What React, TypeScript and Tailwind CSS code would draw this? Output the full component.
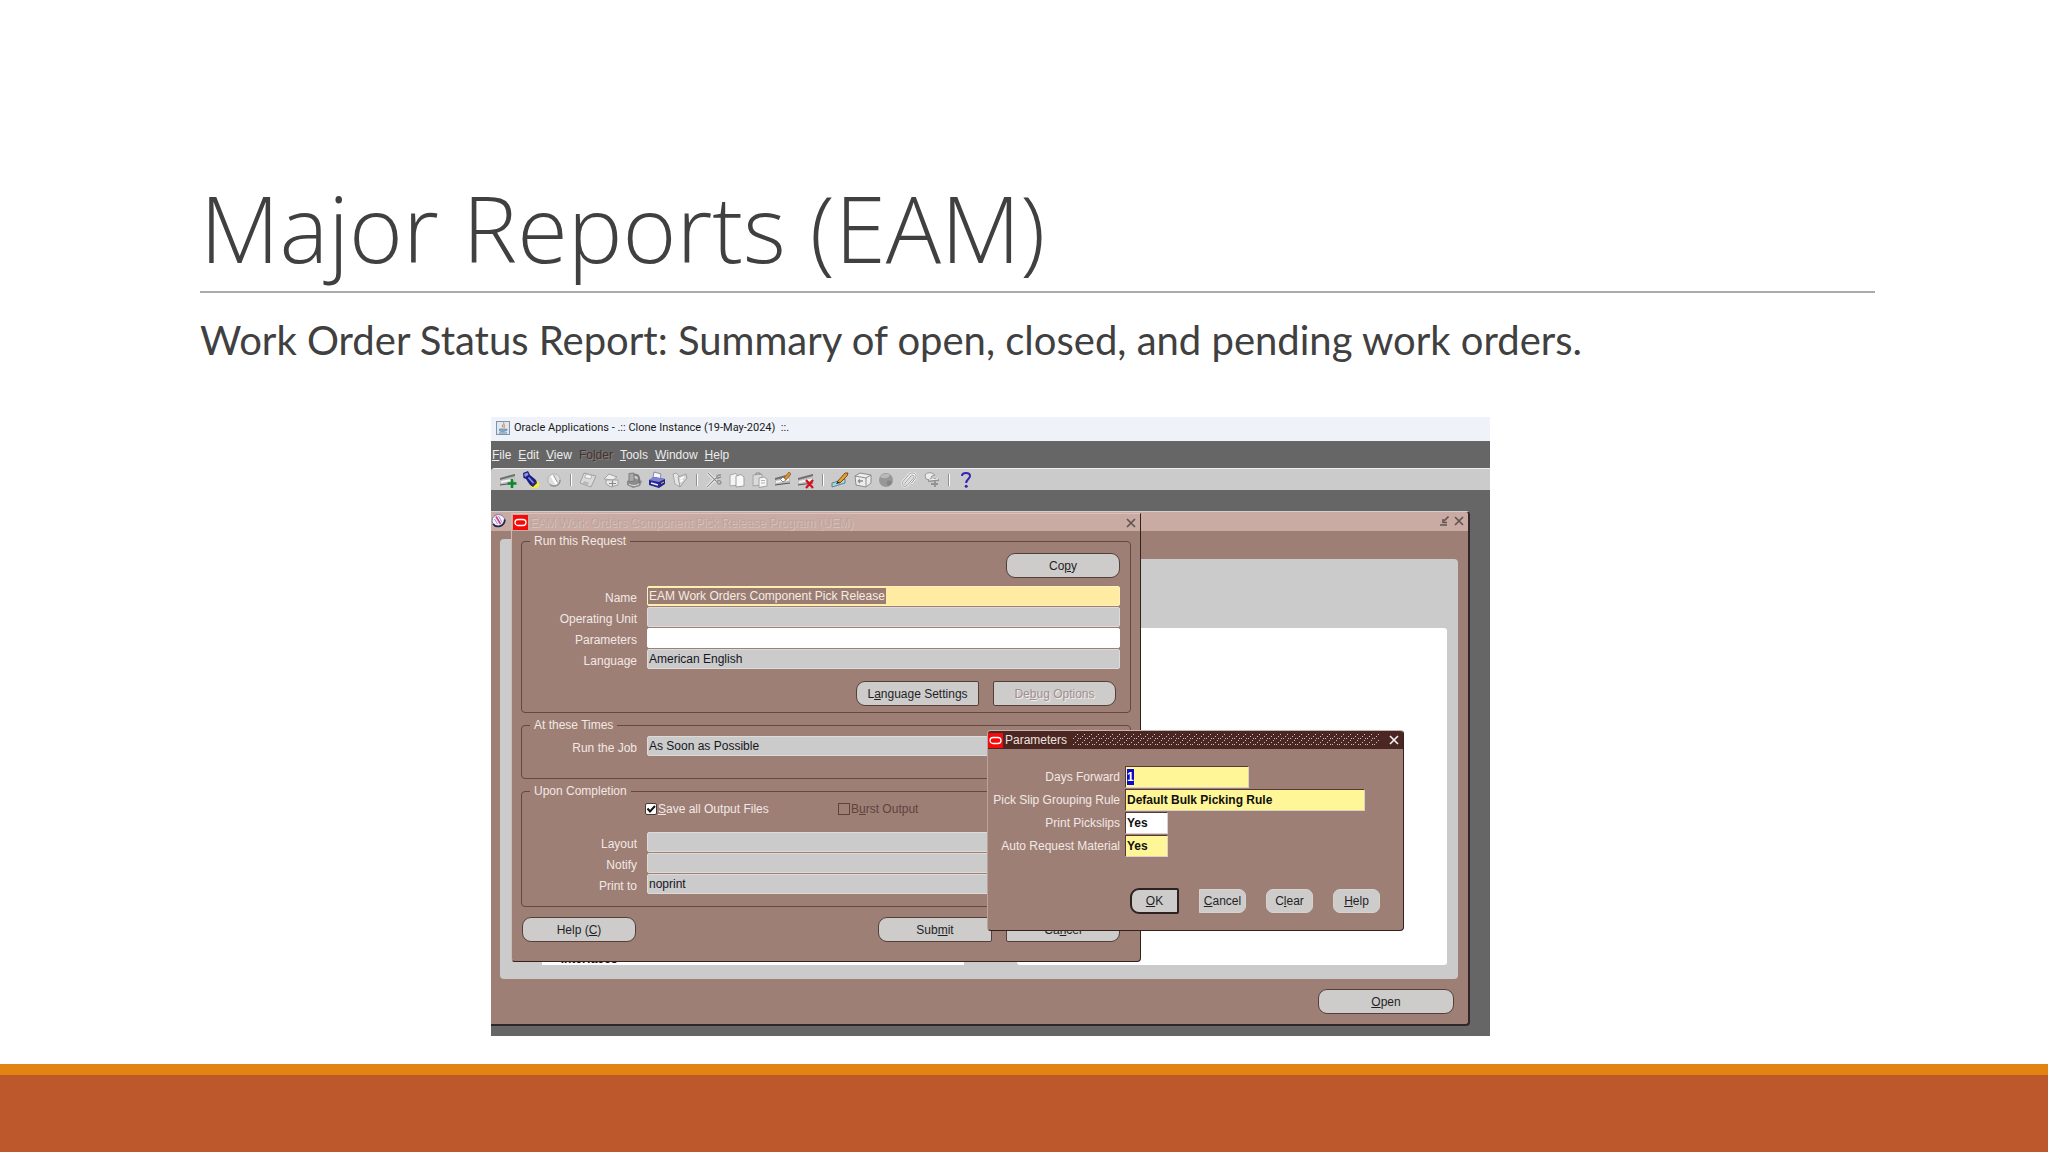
import React from "react";
import clsx from "clsx";

const svgProps = { width: 18, height: 18, viewBox: "0 0 18 18", fill: "none" };

// ---- toolbar icons ----

function Strip() {
  return (
    <>
      <path d="M1 7 L16 3 V12 L1 14 Z" fill="#bdbdbd" />
      <path d="M1 7 L16 3 V5 L1 9 Z" fill="#6f6f6f" />
      <path d="M2 10 L15 7.5 V9.5 L2 12 Z" fill="#f4f4f4" />
      <path d="M1 14 L16 12" stroke="#555" />
    </>
  );
}

const NewIcon = () => (
  <svg {...svgProps}>
    <Strip />
    <path d="M13 8 V17 M8.5 12.5 H17.5" stroke="#0b8a2c" strokeWidth="2.6" />
  </svg>
);

const FindIcon = () => (
  <svg {...svgProps}>
    <ellipse cx="12.5" cy="13.5" rx="5" ry="3.8" fill="#f3ec3b" />
    <path d="M1 2 L6 0 L8 4 L14 9 L15 12 L11 16 L8 14 L4 8 L1.5 7 Z" fill="#1d1d86" />
    <path d="M2 3 L5.5 1.5 L6.5 4 L3 6 Z" fill="#8e93dd" />
    <path d="M6.5 6.5 L11.5 12" stroke="#8d94ea" strokeWidth="1.6" />
    <path d="M10.5 14.5 L14 11" stroke="#3a3a3a" strokeWidth="1.4" />
  </svg>
);

const NavigatorIcon = () => (
  <svg {...svgProps}>
    <circle cx="9" cy="9" r="6.2" fill="#dedede" stroke="#b1b1b1" />
    <path d="M5 13.5 C8 16.5 15 15 15 9" stroke="#929292" strokeWidth="1.4" />
    <path d="M6.5 4.5 L11.5 13" stroke="#fff" strokeWidth="2.6" />
    <path d="M8.5 4 L12.5 11.5" stroke="#999" />
  </svg>
);

const SaveIcon = () => (
  <svg {...svgProps}>
    <path d="M5 2 L17 5 L12 16 L1 12 Z" fill="#dadada" stroke="#a0a0a0" />
    <path d="M7 3 L13 4.5 L11.5 8 L5.5 6.5 Z" fill="#f5f5f5" stroke="#b3b3b3" />
    <path d="M5 10 L10 11.5 L8.5 14.5 L3.5 12.8 Z" fill="#b9b9b9" />
  </svg>
);

const NextStepIcon = () => (
  <svg {...svgProps}>
    <path d="M2 8 L7 3 L15 6 L11 9 Z" fill="#eee" stroke="#a3a3a3" />
    <path d="M4 9 L16 9 V14 L9 16 L4 13 Z" fill="#e7e7e7" stroke="#a3a3a3" />
    <path d="M7 12.5 H14 M10.5 9.5 V15.5" stroke="#8b8b8b" strokeWidth="1.2" />
  </svg>
);

const CloseFormIcon = () => (
  <svg {...svgProps}>
    <path d="M2 10 L9 7 L17 10 L15 15 L8 17 L2 14 Z" fill="#8c8c8c" />
    <path d="M4 2.5 L9 2 V10 L4 11 Z" fill="#a9a9a9" stroke="#7e7e7e" />
    <path d="M9 4 C13 3 15 6 14 12" stroke="#7b7b7b" strokeWidth="2" />
    <path d="M4 13 C7 15 11 15 14 13" stroke="#dedede" />
  </svg>
);

const PrintIcon = () => (
  <svg {...svgProps}>
    <path d="M6 1 L13 3 L12 8 L5 7 Z" fill="#f7f7ff" stroke="#71719f" strokeWidth=".8" />
    <path d="M1 9 L6 6 L17 8 V13 L11 17 L1 14 Z" fill="#25258f" />
    <path d="M1 9 L6 6 L17 8 L11 11 Z" fill="#7e83cf" />
    <path d="M3 12 L10 14" stroke="#e9e9ff" strokeWidth="1.6" />
    <path d="M13 12.5 L16 11" stroke="#e2cf50" />
  </svg>
);

const FolderIcon = () => (
  <svg {...svgProps}>
    <path d="M2 3 L5 2 L8 5 L9 16 L4 13 Z" fill="#e6e6e6" stroke="#a7a7a7" />
    <path d="M7 6 L15 3 L16 7 L9 16 Z" fill="#d6d6d6" stroke="#a0a0a0" />
    <path d="M9 8 L13 6 M9 10.5 L12 9" stroke="#fff" strokeWidth="1.4" />
  </svg>
);

const CutIcon = () => (
  <svg {...svgProps}>
    <path d="M3 2 L12 11 M2 16 L12 6" stroke="#fff" strokeWidth="2.6" />
    <path d="M3 2 L12 11 M2 16 L12 6" stroke="#8d8d8d" strokeWidth="1.1" />
    <path d="M16 4 C12 3.5 11 6 12 7.5 L16 6 M12 10 C14 9 16 10 16 12 C15 14 12 13 12 10" stroke="#919191" strokeWidth="1.4" />
  </svg>
);

const CopyIcon = () => (
  <svg {...svgProps}>
    <path d="M2 4 L8 2.5 L10 5 V14 L2 15 Z" fill="#f4f4f4" stroke="#a8a8a8" />
    <path d="M8 5 L13 3.5 L16 6 V15 L8 16 Z" fill="#f9f9f9" stroke="#9f9f9f" />
  </svg>
);

const PasteIcon = () => (
  <svg {...svgProps}>
    <path d="M2 4 L11 3 V14 L2 15 Z" fill="#dadada" stroke="#a4a4a4" />
    <path d="M5 4 V2 H9 V4" stroke="#8d8d8d" />
    <path d="M8 7 L13 6 L16 8 V15 L8 16.5 Z" fill="#f6f6f6" stroke="#a1a1a1" />
    <path d="M10 9.5 H14 M10 12 H14" stroke="#b5b5b5" />
  </svg>
);

const ClearIcon = () => (
  <svg {...svgProps}>
    <Strip />
    <path d="M15 1 L17 3 L12 9 L9 8 Z" fill="#e0922d" stroke="#7a4414" strokeWidth=".6" />
    <path d="M9 6 L12 9 L9 11 L6.5 8.5 Z" fill="#fff" stroke="#7c5148" strokeWidth=".7" />
  </svg>
);

const DeleteIcon = () => (
  <svg {...svgProps}>
    <Strip />
    <path d="M9 9 L16 17 M16 9 L9 17" stroke="#d3101c" strokeWidth="2.2" />
  </svg>
);

const EditIcon = () => (
  <svg {...svgProps}>
    <path d="M1 12 L14 8 V12 L1 16 Z" fill="#9fdce2" stroke="#4d6f73" strokeWidth=".8" />
    <path d="M6 11 L14 2 L17 2 L16 5 L9 12 Z" fill="#ea9a2e" stroke="#5e3713" strokeWidth=".8" />
    <path d="M5 13 L6.5 10.5 L9 12 Z" fill="#222" />
  </svg>
);

const ZoomIcon = () => (
  <svg {...svgProps}>
    <path d="M1 5 L6 2 L17 4 V12 L12 16 L2 14 Z" fill="#ededed" stroke="#8b8b8b" />
    <path d="M1 5 L12 7 L17 4 M12 7 V15" stroke="#8b8b8b" />
    <path d="M4 10 H9 M4 10 L6 8.5 M4 10 L6 12" stroke="#8d8d8d" strokeWidth="1.3" />
  </svg>
);

const TranslateIcon = () => (
  <svg {...svgProps}>
    <circle cx="9" cy="9" r="7" fill="#979797" />
    <path d="M3 6 C6 2 11 2 13 4 C11 8 7 8 3 6 Z" fill="#b9b9b9" />
    <path d="M10 10 C13 9 15 10 15 12 C13 15 11 15 10 13 Z" fill="#858585" />
  </svg>
);

const clipPath = "M5 12 L11 5 C13 3 15 5 13.5 7 L7 14.5 C4 17 0.5 13.5 3 10.5 L9 3.5 C12 0 18 3 15.5 7 L11 12.5";

const AttachIcon = () => (
  <svg {...svgProps}>
    <path d={clipPath} stroke="#f4f4f4" strokeWidth="2.2" />
    <path d={clipPath} stroke="#8f8f8f" strokeWidth=".9" />
  </svg>
);

const ToolsIcon = () => (
  <svg {...svgProps}>
    <path d="M2 4 C5 0 10 2 12 4 L9 5 L7 9 L3 8 Z" fill="#ececec" stroke="#999" />
    <path d="M5 10 L16 9 M12 7 V16 M8 13 L15 13" stroke="#929292" strokeWidth="1.8" />
    <path d="M6 9 L15 8" stroke="#f8f8f8" />
  </svg>
);

const HelpIcon = () => (
  <svg {...svgProps}>
    <path
      d="M5 5 C5 1 13 1 13 5 C13 8 9.2 8 9.2 12"
      stroke="#3226b4"
      strokeWidth="2"
    />
    <circle cx="9.2" cy="15.2" r="1.5" fill="#3226b4" />
  </svg>
);

const toolGroups = [
  [
    { name: "New", Icon: NewIcon },
    { name: "Find", Icon: FindIcon },
    { name: "Show Navigator", Icon: NavigatorIcon },
  ],
  [
    { name: "Save", Icon: SaveIcon },
    { name: "Next Step", Icon: NextStepIcon },
    { name: "Close Form", Icon: CloseFormIcon },
    { name: "Print", Icon: PrintIcon },
    { name: "Folder", Icon: FolderIcon },
  ],
  [
    { name: "Cut", Icon: CutIcon },
    { name: "Copy", Icon: CopyIcon },
    { name: "Paste", Icon: PasteIcon },
    { name: "Clear Record", Icon: ClearIcon },
    { name: "Delete", Icon: DeleteIcon },
  ],
  [
    { name: "Edit", Icon: EditIcon },
    { name: "Zoom", Icon: ZoomIcon },
    { name: "Translations", Icon: TranslateIcon },
    { name: "Attachments", Icon: AttachIcon },
    { name: "Folder Tools", Icon: ToolsIcon },
  ],
  [{ name: "Help", Icon: HelpIcon }],
];

// ---- small window parts ----

const JavaIcon = () => (
  <svg width="14" height="14" viewBox="0 0 14 14" fill="none" className="shrink-0">
    <rect x=".5" y=".5" width="13" height="13" fill="#dfe8f0" stroke="#7f93a8" />
    <path d="M7.5 1.5 C9 3 5 4 7 6.5 M9 3.5 C7.5 4.5 8 5.5 8.5 6.5" stroke="#dc6a24" />
    <path d="M3.5 8 H9.5 V9.5 C9.5 11 3.5 11 3.5 9.5 Z M10 8 C12 8 11.5 9.8 9.5 10" fill="#8ba9c6" stroke="#5b83aa" strokeWidth=".7" />
    <path d="M3 12 H11" stroke="#5b83aa" />
  </svg>
);

const OracleMark = () => (
  <svg width="15" height="15" viewBox="0 0 15 15" fill="none" className="shrink-0">
    <rect width="15" height="15" fill="#f50a0a" />
    <rect x="2" y="4.5" width="11" height="6" rx="3" stroke="#fff" strokeWidth="1.3" />
  </svg>
);

const CompassIcon = () => (
  <svg width="15" height="15" viewBox="0 0 15 15" fill="none" className="shrink-0">
    <ellipse cx="7.5" cy="7.5" rx="6.4" ry="6" fill="#eef0fa" stroke="#7a7aa8" strokeWidth="1" />
    <path d="M2 11 C5 15 13.5 14 13.8 6.5" stroke="#23234e" strokeWidth="1.8" />
    <path d="M5 3.5 L9.5 11" stroke="#d43c8c" strokeWidth="1.7" />
    <path d="M7.5 3 L11 9.5 M3.5 6 L6.5 11" stroke="#8f8fb8" strokeWidth=".9" />
  </svg>
);

const CrossIcon = () => (
  <svg width="10" height="10" viewBox="0 0 10 10" fill="none">
    <path d="M1 1 L9 9 M9 1 L1 9" stroke="currentColor" strokeWidth="1.7" />
  </svg>
);

const RestoreIcon = () => (
  <svg width="10" height="10" viewBox="0 0 10 10" fill="none">
    <path d="M1 9 H8 M9.5 .5 L5 5" stroke="currentColor" strokeWidth="1.6" />
    <path d="M4 3 V6.5 H8" stroke="currentColor" strokeWidth="1.6" />
  </svg>
);

// underlines the mnemonic letter of a caption
function Caption({ text, at }: { text: string; at?: number }) {
  if (at === undefined) return <>{text}</>;
  return (
    <>
      {text.slice(0, at)}
      <span className="underline">{text[at]}</span>
      {text.slice(at + 1)}
    </>
  );
}

function FormButton({
  text,
  at,
  className,
  disabled,
}: {
  text: string;
  at?: number;
  className?: string;
  disabled?: boolean;
}) {
  return (
    <button
      type="button"
      disabled={disabled}
      className={clsx(
        "border bg-[#cdcccb] text-center leading-4 whitespace-nowrap",
        disabled ? "text-[#a28f8b] [text-shadow:1px_1px_0_#eee]" : "text-[#1f1f26]",
        className
      )}
    >
      <Caption text={text} at={at} />
    </button>
  );
}

function Field({
  id,
  label,
  value = "",
  tone = "grey",
}: {
  id: string;
  label: string;
  value?: string;
  tone?: "grey" | "white" | "selected";
}) {
  return (
    <div className="flex items-center gap-[10px]">
      <label htmlFor={id} className="w-[115px] shrink-0 pt-1 text-right text-[#f3e8e4]">
        {label}
      </label>
      <div
        className={clsx(
          "flex h-5 flex-1 items-center rounded-xs border",
          tone === "grey" && "border-[#dedad8] bg-[#cbcbcb]",
          tone === "white" && "border-white bg-white",
          tone === "selected" && "border-[#fff1bd] bg-[#ffeba2]"
        )}
      >
        <input
          id={id}
          readOnly
          value={value}
          className={clsx(
            "h-4 px-px outline-none",
            tone === "selected"
              ? "bg-[#9a7d72] text-[#f6ece4] [field-sizing:content]"
              : "w-full bg-transparent text-[#16161c]"
          )}
        />
      </div>
    </div>
  );
}

function ParamField({
  id,
  label,
  value,
  width,
  tone = "yellow",
  selected,
}: {
  id: string;
  label: string;
  value: string;
  width: string;
  tone?: "yellow" | "white";
  selected?: boolean;
}) {
  return (
    <div className="flex items-center gap-[5px]">
      <label htmlFor={id} className="w-[132px] shrink-0 text-right text-[#f3e8e4]">
        {label}
      </label>
      <div
        className={clsx(
          "flex h-[22px] items-center border border-t-[#553832] border-r-[#ddd0cb] border-b-[#ddd0cb] border-l-[#553832]",
          tone === "yellow" ? "bg-[#fff797]" : "bg-white",
          width
        )}
      >
        <input
          id={id}
          readOnly
          value={value}
          className={clsx(
            "h-4 font-bold outline-none",
            selected
              ? "ml-px bg-[#0909c9] text-white [field-sizing:content]"
              : "w-full bg-transparent pl-px text-[#101010]"
          )}
        />
      </div>
    </div>
  );
}

function Group({
  title,
  className,
  children,
}: {
  title: string;
  className?: string;
  children: React.ReactNode;
}) {
  return (
    <fieldset className={clsx("min-w-0 rounded-[4px] border border-[#644841] pr-[10px]", className)}>
      <legend className="ml-2 h-4 px-1 leading-4 text-[#f3e8e4]">{title}</legend>
      {children}
    </fieldset>
  );
}

function RequestDialog() {
  return (
    <div className="absolute top-[23px] left-[20px] w-[630px] rounded-b-[4px] border border-t-[#d9c2bc] border-r-[#33211e] border-b-[#33211e] border-l-[#cdbab4] bg-[#9d7f76]">
      <div className="flex h-[17px] items-center gap-[2px] bg-[#c9aba4] pr-1 pl-px">
        <OracleMark />
        <span className="flex-1 leading-4 text-[#bda49c] [text-shadow:1px_1px_0_#d6c2ba]">
          EAM Work Orders Component Pick Release Program (UEM)
        </span>
        <button type="button" aria-label="Close request" className="text-[#625450]">
          <CrossIcon />
        </button>
      </div>

      <div className="flex flex-col px-[9px] pt-[2px] pb-[19px]">
        <Group title="Run this Request" className="pb-[6px]">
          <div className="mt-1 flex justify-end">
            <FormButton text="Copy" at={2} className="h-[25px] w-[114px] rounded-[9px] border-[#54403a]" />
          </div>
          <div className="mt-2 flex flex-col gap-px">
            <Field id="name" label="Name" value="EAM Work Orders Component Pick Release" tone="selected" />
            <Field id="operating-unit" label="Operating Unit" />
            <Field id="parameters" label="Parameters" tone="white" />
            <Field id="language" label="Language" value="American English" />
          </div>
          <div className="mt-3 flex justify-end gap-[14px] pr-1">
            <FormButton
              text="Language Settings"
              at={1}
              className="h-[25px] w-[123px] rounded-l-[9px] rounded-r-[2px] border-[#54403a]"
            />
            <FormButton
              text="Debug Options"
              at={2}
              disabled
              className="h-[25px] w-[123px] rounded-l-[2px] rounded-r-[9px] border-[#54403a]"
            />
          </div>
        </Group>

        <Group title="At these Times" className="mt-1 pb-[22px]">
          <div className="mt-[3px]">
            <Field id="run-the-job" label="Run the Job" value="As Soon as Possible" />
          </div>
        </Group>

        <Group title="Upon Completion" className="mt-1 pb-3">
          <div className="mt-[2px] flex pl-[123px]">
            <label className="flex h-4 w-[193px] items-center gap-px text-[#f3e8e4]">
              <span className="relative flex">
                <input
                  type="checkbox"
                  defaultChecked
                  className="peer size-3 appearance-none rounded-xs border border-[#4d3832] bg-white"
                />
                <svg
                  viewBox="0 0 12 12"
                  fill="none"
                  className="pointer-events-none absolute inset-0 size-3 opacity-0 peer-checked:opacity-100"
                >
                  <path d="M2.5 5.5 L5 8.5 L10 3" stroke="#111" strokeWidth="2" />
                </svg>
              </span>
              <span>
                <Caption text="Save all Output Files" at={0} />
              </span>
            </label>
            <label className="flex h-4 items-center gap-px text-[#5d443e]">
              <input
                type="checkbox"
                disabled
                className="size-3 appearance-none border border-[#5d443e]"
              />
              <span>
                <Caption text="Burst Output" at={1} />
              </span>
            </label>
          </div>
          <div className="mt-[15px] flex flex-col gap-px">
            <Field id="layout" label="Layout" />
            <Field id="notify" label="Notify" />
            <Field id="print-to" label="Print to" value="noprint" />
          </div>
        </Group>

        <div className="mt-[10px] flex gap-[14px] pr-[11px] pl-px">
          <FormButton text="Help (C)" at={6} className="mr-auto h-[25px] w-[114px] rounded-[9px] border-[#54403a]" />
          <FormButton text="Submit" at={3} className="h-[25px] w-[114px] rounded-l-[9px] rounded-r-[2px] border-[#54403a]" />
          <FormButton text="Cancel" at={2} className="h-[25px] w-[114px] rounded-l-[2px] rounded-r-[9px] border-[#54403a]" />
        </div>
      </div>
    </div>
  );
}

function ParametersDialog() {
  return (
    <div className="absolute top-[240px] left-[496px] w-[417px] overflow-hidden rounded-[4px] border border-t-[#c9b4ae] border-r-[#33211e] border-b-[#33211e] border-l-[#b8a49d] bg-[#9d7f76]">
      <div className="flex h-[18px] items-center gap-[2px] bg-[#4b2723] pr-1">
        <OracleMark />
        <span className="text-[#efe3df]">Parameters</span>
        <svg height="12" className="mr-2 ml-1 flex-1">
          <defs>
            <pattern id="grip" width="7" height="6" patternUnits="userSpaceOnUse">
              <path d="M0 4 h1 v1 h-1z M2 2 h1 v1 h-1z M4 0 h1 v1 h-1z M5 4 h1 v1 h-1z" fill="#d3beb8" />
            </pattern>
          </defs>
          <rect width="100%" height="12" fill="url(#grip)" />
        </svg>
        <button type="button" aria-label="Close parameters" className="text-[#f6efec]">
          <CrossIcon />
        </button>
      </div>

      <div className="flex flex-col gap-px pt-[17px]">
        <ParamField id="days-forward" label="Days Forward" value="1" width="w-[124px]" selected />
        <ParamField id="grouping-rule" label="Pick Slip Grouping Rule" value="Default Bulk Picking Rule" width="w-[240px]" />
        <ParamField id="print-pickslips" label="Print Pickslips" value="Yes" width="w-[43px]" tone="white" />
        <ParamField id="auto-request" label="Auto Request Material" value="Yes" width="w-[43px]" />
      </div>

      <div className="mt-[31px] mb-4 flex items-center gap-5 pl-[142px]">
        <FormButton text="OK" at={0} className="h-[26px] w-[49px] rounded-l-[9px] rounded-r-[2px] border-2 border-[#2d2220]" />
        <FormButton text="Cancel" at={0} className="h-6 w-[47px] rounded-r-[7px] border-[#d8d2cf]" />
        <FormButton text="Clear" at={1} className="h-6 w-[47px] rounded-[7px] border-[#d8d2cf]" />
        <FormButton text="Help" at={0} className="h-6 w-[47px] rounded-[7px] border-[#d8d2cf]" />
      </div>
    </div>
  );
}

function NavigatorWindow() {
  return (
    <div className="mr-5 flex h-[515px] flex-col rounded-tr-[4px] rounded-br-[4px] border-t border-r-2 border-b-2 border-t-[#d6cfcb] border-r-[#33262a] border-b-[#33262a] bg-[#9d7f76]">
      <div className="flex h-[19px] items-center gap-[5px] rounded-tr-[3px] bg-[#c9aba4] pr-1 pb-[2px] text-[#625450]">
        <CompassIcon />
        <button type="button" aria-label="Restore" className="ml-auto">
          <RestoreIcon />
        </button>
        <button type="button" aria-label="Close navigator">
          <CrossIcon />
        </button>
      </div>

      <div className="mt-2 ml-[9px] h-5 w-[200px] rounded-t-[4px] bg-[#cbcbcb]" />
      <div className="mr-[10px] ml-[9px] grid h-[420px] grid-cols-[42px_422px_53px_1fr] rounded-b-[4px] rounded-tr-[4px] bg-[#cbcbcb] pt-[69px] pr-[11px] pb-[14px]">
        <div />
        <div className="flex items-end bg-white">
          <span className="pl-[5px] leading-3 font-bold whitespace-pre text-[#101010]">+  Interfaces</span>
        </div>
        <div />
        <div className="rounded-[3px] bg-white" />
      </div>

      <div className="mt-[10px] mr-[14px] flex justify-end">
        <FormButton text="Open" at={0} className="h-[25px] w-[136px] rounded-[9px] border-[#54403a]" />
      </div>
    </div>
  );
}

const menus = [
  { text: "File", at: 0 },
  { text: "Edit", at: 0 },
  { text: "View", at: 0 },
  { text: "Folder", at: 2, off: true },
  { text: "Tools", at: 0 },
  { text: "Window", at: 0 },
  { text: "Help", at: 0 },
];

function OracleApp() {
  return (
    <div className="w-full max-w-[999px] overflow-hidden bg-[#666] font-['Liberation_Sans',Arial,sans-serif] text-[12px] leading-4">
      <div className="flex h-6 items-center gap-1 bg-[#eff3f9] pb-[2px] pl-[5px] font-['Roboto','Open_Sans',sans-serif] text-[11px] whitespace-pre text-[#1b1b1b]">
        <JavaIcon />
        {"Oracle Applications - .:: Clone Instance (19-May-2024)  ::."}
      </div>

      <nav className="flex h-[27px] items-center gap-[7px] pl-px">
        {menus.map((m) => (
          <button
            key={m.text}
            type="button"
            disabled={m.off}
            className={m.off ? "text-[#3f3633] [text-shadow:1px_1px_0_#8b7b76]" : "text-[#ececec]"}
          >
            <Caption text={m.text} at={m.at} />
          </button>
        ))}
      </nav>

      <div className="flex h-[22px] items-center rounded-tl-[4px] border-t border-[#eee] bg-[#cbcbcb] pl-[5px]">
        {toolGroups.map((group, i) => (
          <React.Fragment key={i}>
            {i > 0 && (
              <span className="flex w-[11px] justify-center">
                <span className="h-3 w-[2px] border-r border-l border-r-white border-l-[#8f8f8f]" />
              </span>
            )}
            {group.map(({ name, Icon }) => (
              <button
                key={name}
                type="button"
                aria-label={name}
                className="flex w-[23px] justify-center"
              >
                <Icon />
              </button>
            ))}
          </React.Fragment>
        ))}
      </div>

      <div className="relative pt-[21px] pb-[10px]">
        <NavigatorWindow />
        <RequestDialog />
        <ParametersDialog />
      </div>
    </div>
  );
}

export default function App() {
  return (
    <div className="flex min-h-screen flex-col bg-white text-[#404040]">
      <main className="flex-1 pt-[178px] pr-[173px] pl-[200px]">
        <h1 className="border-b-2 border-[#ababab] pb-[13px] font-['Open_Sans',sans-serif] text-[92px] leading-[100px] font-light">
          Major Reports (EAM)
        </h1>
        <p className="mt-[23px] font-['Lato',sans-serif] text-[40px] leading-[48px]">
          Work Order Status Report: Summary of open, closed, and pending work orders.
        </p>
        <div className="mt-[53px] pl-[291px]">
          <OracleApp />
        </div>
      </main>
      <footer className="h-[88px] border-t-[11px] border-[#e38412] bg-[#bd582c]" />
    </div>
  );
}
